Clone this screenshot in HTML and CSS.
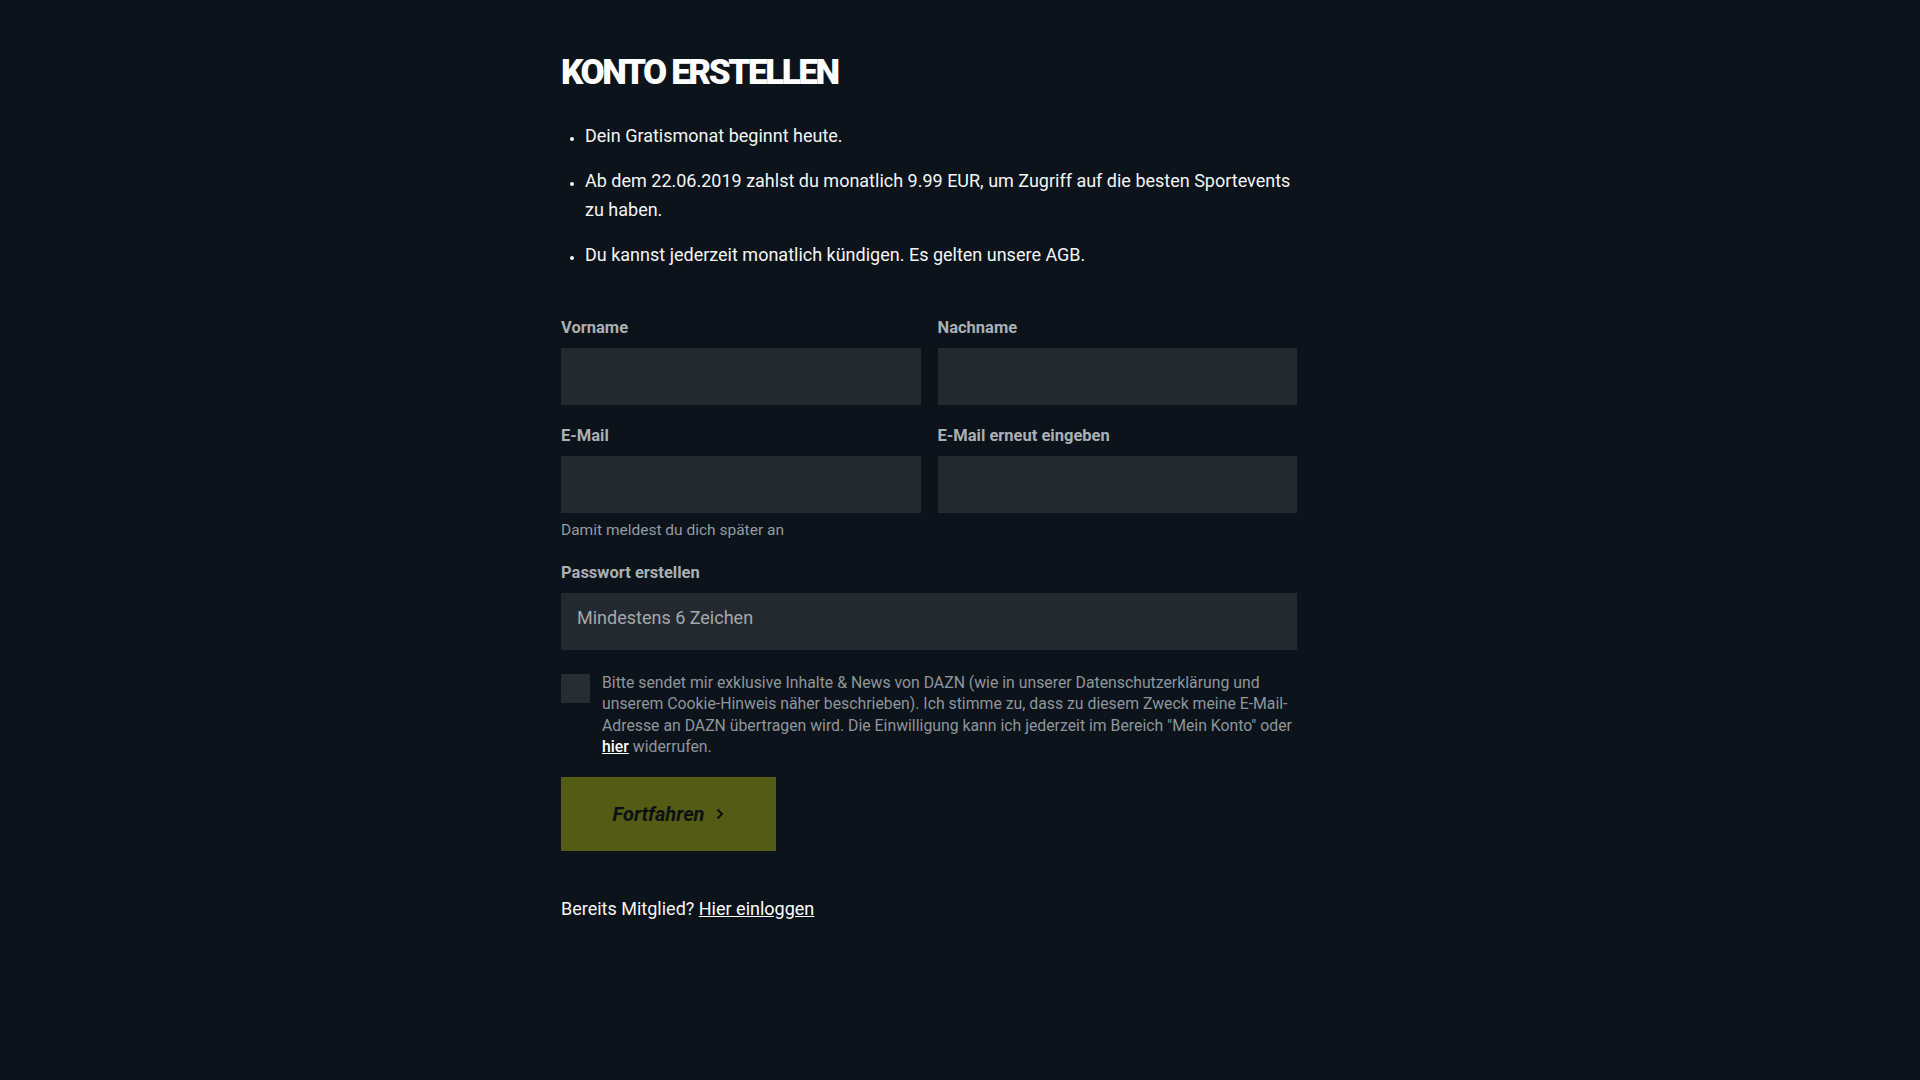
FILE: index.html
```html
<!DOCTYPE html>
<html lang="de">
<head>
  <meta charset="UTF-8">
  <meta name="viewport" content="width=device-width, initial-scale=1.0">
  <title>DAZN - Konto erstellen</title>
  <link rel="stylesheet" href="styles.css">
</head>
<body>
  <div class="page">
    <h1 class="title">KONTO ERSTELLEN</h1>
    <ul class="info">
      <li>Dein Gratismonat beginnt heute.</li>
      <li>Ab dem 22.06.2019 zahlst du monatlich 9.99 EUR, um Zugriff auf die besten Sportevents zu haben.</li>
      <li>Du kannst jederzeit monatlich kündigen. Es gelten unsere AGB.</li>
    </ul>

    <form id="signupForm" class="signup">
      <div class="row">
        <div class="field">
          <label for="firstName">Vorname</label>
          <input type="text" id="firstName" name="firstName">
        </div>
        <div class="field">
          <label for="lastName">Nachname</label>
          <input type="text" id="lastName" name="lastName">
        </div>
      </div>

      <div class="row">
        <div class="field">
          <label for="email">E-Mail</label>
          <input type="email" id="email" name="email">
          <p class="hint">Damit meldest du dich später an</p>
        </div>
        <div class="field">
          <label for="email2">E-Mail erneut eingeben</label>
          <input type="email" id="email2" name="email2">
        </div>
      </div>

      <div class="field">
        <label for="password">Passwort erstellen</label>
        <input type="password" id="password" name="password" placeholder="Mindestens 6 Zeichen">
      </div>

      <div class="consent">
        <input type="checkbox" id="newsletter" name="newsletter">
        <label for="newsletter">Bitte sendet mir exklusive Inhalte &amp; News von DAZN (wie in unserer Datenschutzerklärung und unserem Cookie-Hinweis näher beschrieben). Ich stimme zu, dass zu diesem Zweck meine E-Mail-Adresse an DAZN übertragen wird. Die Einwilligung kann ich jederzeit im Bereich "Mein Konto" oder <a href="#">hier</a> widerrufen.</label>
      </div>

      <button type="submit" class="submit">
        Fortfahren
        <svg width="8" height="12" viewBox="0 0 8 12"><path d="M1.5 1.5 L6 6 L1.5 10.5" fill="none" stroke="#0c1013" stroke-width="2"/></svg>
      </button>
    </form>

    <p class="login">Bereits Mitglied? <a href="#">Hier einloggen</a></p>
  </div>
</body>
</html>
```

FILE: styles.css
```css
body {
  margin: 0;
  background-color: #0c131a;
  color: #fff;
  font-family: Roboto, "Liberation Sans", sans-serif;
}
.page {
  width: 798px;
  margin: 0 auto;
  padding-top: 53px;
}
.title {
  margin: 0;
  font-size: 35px;
  line-height: 40px;
  font-weight: 900;
  letter-spacing: -2.4px;
  color: #fff;
}
.info {
  list-style: none;
  margin: 28px 0 0;
  padding: 0;
  width: 736px;
}
.info li {
  position: relative;
  padding-left: 24px;
  font-size: 18px;
  line-height: 29px;
  color: #f4f5f5;
  margin-bottom: 16px;
}
.info li:last-child {
  margin-bottom: 0;
}
.info li::before {
  content: "";
  position: absolute;
  left: 9px;
  top: 16px;
  width: 4px;
  height: 4px;
  border-radius: 50%;
  background: #f4f5f5;
}
.signup {
  width: 736px;
  margin-top: 49px;
}
.row {
  display: grid;
  grid-template-columns: 1fr 1fr;
  column-gap: 17px;
  margin-bottom: 21px;
}
.field label {
  display: block;
  font-size: 16.5px;
  line-height: 20px;
  font-weight: 700;
  color: #aab0b5;
  margin-bottom: 10px;
}
.field input {
  display: block;
  width: 100%;
  height: 57px;
  box-sizing: border-box;
  border: none;
  border-radius: 0;
  background: #23292f;
  padding: 0 16px 9px;
  font-family: inherit;
  font-size: 18px;
  color: #fff;
}
.field input::placeholder {
  color: #a3a8ad;
}
.hint {
  margin: 8px 0 0;
  font-size: 15.5px;
  line-height: 18px;
  color: #959ba0;
}
.row:nth-child(2) {
  margin-bottom: 24px;
}
.consent {
  display: flex;
  align-items: flex-start;
  gap: 12px;
  margin-top: 22px;
}
.consent input {
  appearance: none;
  flex: none;
  width: 29px;
  height: 29px;
  margin: 2px 0 0;
  background: #272d33;
}
.consent label {
  font-size: 15.8px;
  line-height: 21.3px;
  color: #8f969c;
}
.consent a {
  color: #fff;
  font-weight: 500;
}
.submit {
  display: flex;
  align-items: center;
  justify-content: center;
  gap: 12px;
  width: 215px;
  height: 74px;
  margin-top: 20px;
  border: none;
  background: #545b14;
  color: #0c1013;
  font-family: inherit;
  font-size: 20px;
  font-weight: 700;
  font-style: italic;
  cursor: pointer;
}
.login {
  margin: 46px 0 0;
  font-size: 18px;
  line-height: 24px;
  color: #f4f5f5;
}
.login a {
  color: #fff;
}
```
